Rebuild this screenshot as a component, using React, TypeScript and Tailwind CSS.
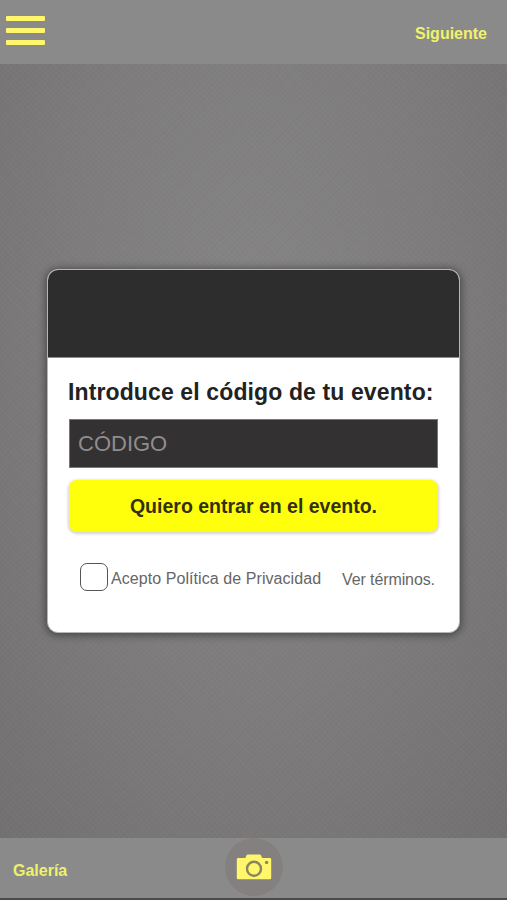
// App.tsx
import { useState } from "react";

function TopBar() {
  return (
    <header className="flex h-16 shrink-0 items-start justify-between bg-[#8a8a8a] pl-1.5 pr-5">
      <button className="mt-4 flex w-[39px] flex-col gap-[7px]" aria-label="Menú">
        <span className="h-[5px] w-full rounded-[1px] bg-[#fff66b]" />
        <span className="h-[5px] w-full rounded-[1px] bg-[#fff66b]" />
        <span className="h-[5px] w-full rounded-[1px] bg-[#fff66b]" />
      </button>
      <button className="mt-6 text-base leading-5 font-bold whitespace-nowrap text-[#f2f26a]">
        Siguiente
      </button>
    </header>
  );
}

function CameraIcon() {
  return (
    <svg width="36" height="26" viewBox="0 0 36 26" fill="none">
      <path
        d="M2 4H8.500Q9.800 4 10 2.500Q10.200 .5 12 .5H23.500Q25.300 .5 25.500 2.500Q25.700 4 27 4H34Q35.200 4 35.200 5.200V24Q35.200 25.200 34 25.200H2Q.8 25.200 .8 24V5.200Q.8 4 2 4Z"
        fill="#fff66b"
      />
      <circle cx="18" cy="14.800" r="7" stroke="#87855f" strokeWidth="2.400" />
      <circle cx="30.600" cy="8.400" r="1.700" fill="#87855f" />
    </svg>
  );
}

function BottomBar() {
  return (
    <footer className="relative flex h-[62px] shrink-0 items-start border-b-2 border-[#4b494a] bg-[#8a8a8a] pl-[13px]">
      <button className="mt-[23px] text-base leading-5 font-bold text-[#eef26a]">Galería</button>
      <button
        className="absolute top-0 left-[225px] flex h-[58px] w-[58px] items-center justify-center rounded-full bg-[#83807f]"
        aria-label="Cámara"
      >
        <CameraIcon />
      </button>
    </footer>
  );
}

function EventCard() {
  const [code, setCode] = useState("");
  const [accepted, setAccepted] = useState(false);

  return (
    <div className="flex h-[364px] w-[413px] flex-col overflow-hidden rounded-[11px] border border-[#b5b7b7] bg-white shadow-[0_1px_9px_1px_rgba(0,0,0,0.45)]">
      <div className="h-[88px] shrink-0 border-b border-[#8e8e8e] bg-[#2d2d2d]" />
      <div className="flex flex-col pt-5 pr-5 pl-[21px]">
        <h1 className="-ml-px h-[41px] text-[23px] leading-7 font-bold tracking-[0.12px] whitespace-nowrap text-[#222]">
          Introduce el código de tu evento:
        </h1>
        <input
          className="h-[49px] w-[369px] border border-[#777] bg-[#333132] px-2 text-[22px] text-white outline-none placeholder:text-[#8f8d8e]"
          placeholder="CÓDIGO"
          value={code}
          onChange={(e) => setCode(e.target.value)}
        />
        <button className="mt-3 h-[52px] w-[369px] rounded-lg bg-[#ffff0b] pt-0.5 text-[19.500px] font-bold text-[#33300f] shadow-[0_1px_3px_1px_rgba(0,0,0,0.18)]">
          Quiero entrar en el evento.
        </button>
        <div className="mt-[31px] flex items-start pl-[11px] text-base whitespace-nowrap text-[#666]">
          <input
            type="checkbox"
            className="h-7 w-7 shrink-0 appearance-none rounded-[7px] border-[1.500px] border-[#555] checked:bg-[#ffff0b]"
            checked={accepted}
            onChange={(e) => setAccepted(e.target.checked)}
            aria-label="Acepto Política de Privacidad"
          />
          <span className="mt-1.5 ml-[3px] w-[231px] leading-5 tracking-[0.07px]">
            Acepto Política de Privacidad
          </span>
          <a className="mt-[7px] leading-5 tracking-[-0.1px]">Ver términos.</a>
        </div>
      </div>
    </div>
  );
}

export default function App() {
  return (
    <div className="flex h-[900px] w-[507px] flex-col overflow-hidden bg-[#7a7879] font-['Liberation_Sans',sans-serif]">
      <TopBar />
      <main className="flex flex-1 items-start justify-center bg-[repeating-linear-gradient(45deg,rgba(255,255,255,0.02)_0px,rgba(255,255,255,0.02)_1px,transparent_1px,transparent_4px),repeating-linear-gradient(135deg,rgba(0,0,0,0.02)_0px,rgba(0,0,0,0.02)_1px,transparent_1px,transparent_4px),radial-gradient(ellipse_at_50%_35%,#868585_0%,#7e7c7d_50%,#727071_100%)] pt-[205px]">
        <EventCard />
      </main>
      <BottomBar />
    </div>
  );
}
